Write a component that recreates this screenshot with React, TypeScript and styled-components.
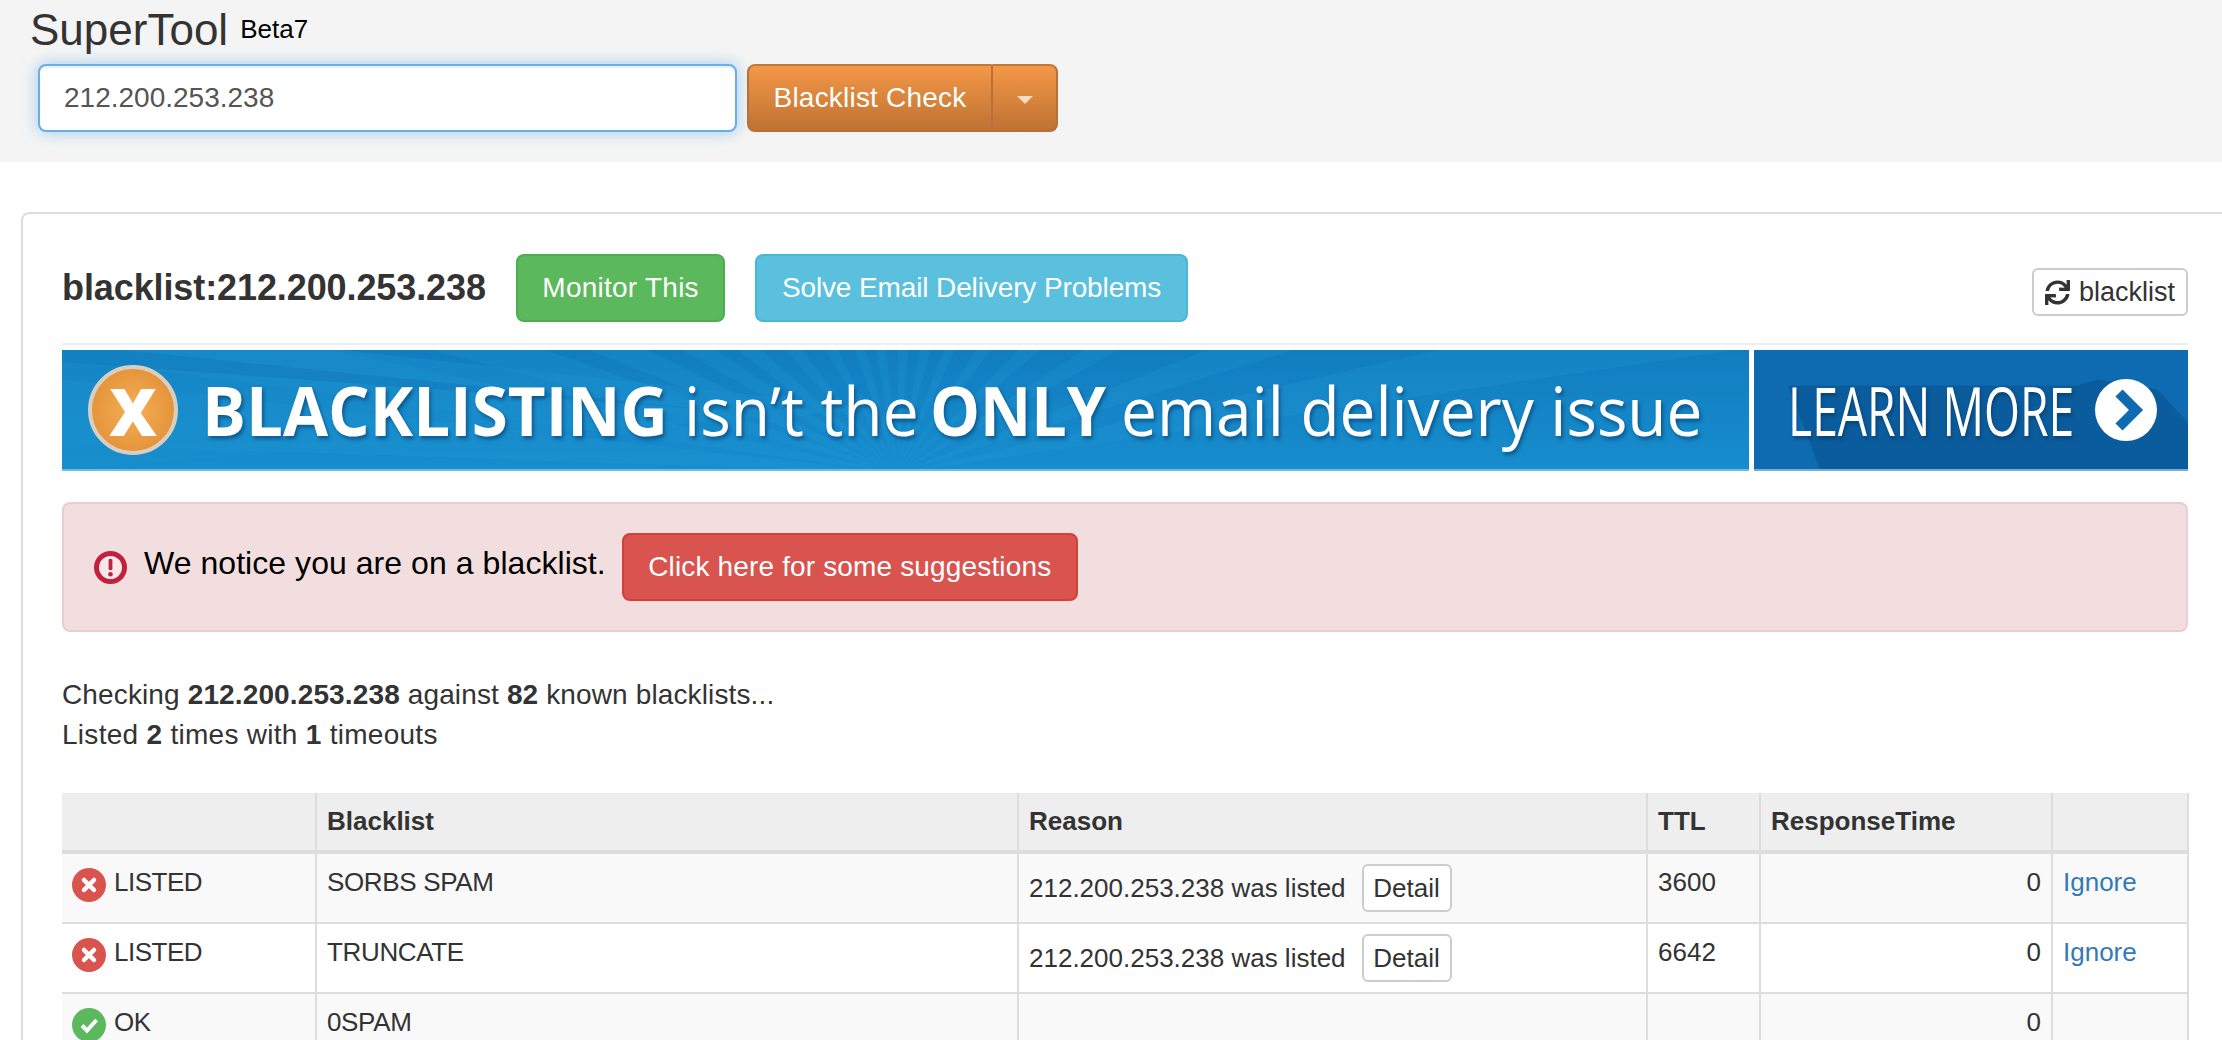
import styled, { createGlobalStyle } from "styled-components";
import { FaSync } from "react-icons/fa";

const GlobalStyle = createGlobalStyle`
  html, body {
    margin: 0;
    padding: 0;
    background: #fff;
    overflow: hidden;
  }
  body {
    width: 2222px;
    height: 1040px;
    font-family: "Liberation Sans", Arial, sans-serif;
    font-size: 28px;
    line-height: 40px;
    color: #333;
  }
  * {
    box-sizing: border-box;
  }
`;

const Page = styled.div`
  width: 2222px;
  height: 1040px;
  overflow: hidden;
`;

const TopBar = styled.header`
  height: 162px;
  background: #f4f4f4;
  padding: 5px 0 0 30px;
`;

const Title = styled.h1`
  margin: 0 0 10px;
  font-size: 44px;
  line-height: 48px;
  font-weight: normal;
  color: #333;
`;

const Version = styled.span`
  margin-left: 12px;
  font-size: 26px;
  color: #000;
  vertical-align: 7px;
`;

const SearchRow = styled.form`
  display: flex;
  gap: 10px;
  margin: 0 0 0 8px;
`;

const SearchInput = styled.input`
  width: 699px;
  height: 68px;
  padding: 0 24px;
  font-family: inherit;
  font-size: 28px;
  color: #555;
  background: #fff;
  border: 2px solid #66afe9;
  border-radius: 8px;
  outline: none;
  box-shadow: inset 0 2px 2px rgba(0, 0, 0, 0.075), 0 0 16px rgba(102, 175, 233, 0.6);
`;

const SplitButton = styled.div`
  display: flex;
  height: 68px;
`;

const OrangeButton = styled.button`
  height: 68px;
  font-family: inherit;
  font-size: 28px;
  color: #fff;
  background: linear-gradient(to bottom, #f39847, #bf7233);
  border: 2px solid #b87038;
  border-top-color: #c27a3c;
`;

const CheckButton = styled(OrangeButton)`
  width: 245px;
  padding: 0;
  letter-spacing: 0.2px;
  border-radius: 8px 0 0 8px;
  border-right-width: 1px;
`;

const CaretButton = styled(OrangeButton)`
  display: flex;
  align-items: center;
  justify-content: center;
  width: 66px;
  padding: 0;
  border-left-width: 1px;
  border-radius: 0 8px 8px 0;
`;

const Caret = styled.span`
  margin-top: 4px;
  border-top: 8px solid #f6dcc2;
  border-left: 8px solid transparent;
  border-right: 8px solid transparent;
`;

const Panel = styled.main`
  width: 2209px;
  margin: 50px 0 0 21px;
  padding: 0 40px 0 39px;
  border: 2px solid #ddd;
  border-radius: 8px 8px 0 0;
`;

const ResultHead = styled.div`
  display: flex;
  align-items: center;
  gap: 30px;
  height: 131px;
  padding: 40px 0 21px;
  border-bottom: 2px solid #eee;
`;

const ResultTitle = styled.h2`
  margin: 0;
  font-size: 36px;
  line-height: 40px;
  font-weight: bold;
  letter-spacing: -0.1px;
  color: #333;
`;

const ActionButton = styled.button<{ $bg: string; $line: string; $track: number }>`
  height: 68px;
  padding: 0 24.5px;
  font-family: inherit;
  font-size: 28px;
  letter-spacing: ${(p) => p.$track}px;
  color: #fff;
  background: ${(p) => p.$bg};
  border: 2px solid ${(p) => p.$line};
  border-radius: 8px;
  white-space: nowrap;
`;

const DefaultButton = styled.button`
  display: inline-flex;
  align-items: center;
  justify-content: center;
  gap: 9px;
  height: 48px;
  font-family: inherit;
  font-size: 26px;
  color: #333;
  background: #fff;
  border: 2px solid #ccc;
  border-radius: 6px;
  padding: 0;
`;

const RefreshButton = styled(DefaultButton)`
  width: 156px;
  margin: 8px 0 0 auto;
  font-size: 27px;
`;

const Banner = styled.div`
  display: flex;
  gap: 5px;
  height: 121px;
  margin-top: 5px;
  color: #fff;
  font-family: "Open Sans", sans-serif;
  font-size: 68px;
  white-space: nowrap;
  text-shadow: 2px 3px 4px rgba(5, 50, 95, 0.55);
`;

const BannerMain = styled.div`
  position: relative;
  display: flex;
  align-items: center;
  width: 1687px;
  padding-left: 26px;
  overflow: hidden;
  background: linear-gradient(to bottom, #117dbf, #178dcd);
  border-bottom: 2px solid #74b9de;
`;

const BannerSide = styled.div`
  position: relative;
  display: flex;
  align-items: center;
  flex: 1;
  padding-left: 34px;
  overflow: hidden;
  background: #0e6bb1;
  border-bottom: 2px solid #74aed3;
`;

const BannerArt = styled.svg`
  position: absolute;
  left: 0;
  top: 0;
  width: 100%;
  height: 100%;
`;

const BannerContent = styled.div`
  position: relative;
  display: flex;
  align-items: center;
`;

const Badge = styled.div`
  display: flex;
  align-items: center;
  justify-content: center;
  width: 90px;
  height: 90px;
  margin-right: 24px;
  font-size: 66px;
  font-weight: 800;
  color: #fff;
  text-shadow: none;
  border: 4px solid #d8cfc0;
  border-radius: 50%;
  background: radial-gradient(circle, #f5ae56 0%, #e8993f 60%, #dc8a2e 100%);
`;

// the banner lettering is narrower than Open Sans, so each run is squeezed to its measured width
const BannerWord = styled.span<{ $width: number; $scale: number; $bold?: boolean; $gap: number }>`
  display: inline-block;
  width: ${(p) => p.$width}px;
  margin-right: ${(p) => p.$gap}px;
  font-weight: ${(p) => (p.$bold ? 700 : 400)};
  transform: scaleX(${(p) => p.$scale});
  transform-origin: left center;
`;

const Notice = styled.div`
  display: flex;
  align-items: center;
  height: 130px;
  margin-top: 31px;
  padding: 0 30px;
  color: #000;
  font-size: 32px;
  background: #f2dede;
  border: 2px solid #ebccd1;
  border-radius: 8px;
`;

const NoticeText = styled.span`
  margin: -8px 16px 0 17px;
  letter-spacing: 0.05px;
`;

const Summary = styled.div`
  margin: 43px 0 38px;
  font-size: 28px;
  line-height: 40px;
  color: #333;
`;

const SummaryLine = styled.div<{ $track: number }>`
  letter-spacing: ${(p) => p.$track}px;
`;

const Table = styled.table`
  width: 2126px;
  table-layout: fixed;
  border-collapse: collapse;
  font-size: 26px;
  line-height: 37px;
  color: #333;
`;

const HeadCell = styled.th<{ $width: number }>`
  width: ${(p) => p.$width}px;
  height: 59px;
  padding: 10px;
  text-align: left;
  font-weight: bold;
  background: #eee;
  border-left: 2px solid #ddd;
  border-right: 2px solid #ddd;
  border-bottom: 4px solid #ddd;

  &:first-child {
    border-left: 0;
  }
`;

const Row = styled.tr<{ $odd: boolean }>`
  background: ${(p) => (p.$odd ? "#f9f9f9" : "#fff")};
`;

const Cell = styled.td<{ $right?: boolean; $caps?: boolean }>`
  height: 70px;
  padding: 10px;
  vertical-align: top;
  text-align: ${(p) => (p.$right ? "right" : "left")};
  letter-spacing: ${(p) => (p.$caps ? "-0.35px" : "0")};
  border: 2px solid #ddd;

  &:first-child {
    border-left: 0;
  }
`;

const StatusCell = styled.div`
  display: flex;
  gap: 8px;
  letter-spacing: -0.5px;
  white-space: nowrap;
`;

const StatusIcon = styled.svg`
  flex: none;
  width: 34px;
  height: 34px;
  margin-top: 4px;
`;

const ReasonRow = styled.div`
  display: flex;
  align-items: center;
  gap: 16px;
  white-space: nowrap;
`;

const DetailButton = styled(DefaultButton)`
  width: 90px;
`;

const IgnoreLink = styled.a`
  color: #337ab7;
  text-decoration: none;
`;

function StatusBadge({ ok }: { ok: boolean }) {
  return (
    <StatusIcon viewBox="0 0 34 34">
      <circle cx="17" cy="17" r="17" fill={ok ? "#5cb85c" : "#d9534f"} />
      {ok ? (
        <path d="M10 17.5l5 5 9.5-10.5" fill="none" stroke="#fff" strokeWidth="4" />
      ) : (
        <path d="M12 12l10 10M22 12l-10 10" fill="none" stroke="#fff" strokeWidth="4.5" strokeLinecap="round" />
      )}
    </StatusIcon>
  );
}

const rays = [-86, -80, -73, -66, -58, -50, -40, -28, -17, -8, 2, 12, 22, 34, 46, 58, 70, 79];

function RayArt() {
  const cx = 836;
  const cy = 125;
  const reach = 1800;
  return (
    <BannerArt viewBox="0 0 1687 121" preserveAspectRatio="none">
      {rays.map((deg, i) => {
        const a = ((deg - 2) * Math.PI) / 180;
        const b = ((deg + 2.5) * Math.PI) / 180;
        const points = [
          `${cx},${cy}`,
          `${cx + Math.sin(a) * reach},${cy - Math.cos(a) * reach}`,
          `${cx + Math.sin(b) * reach},${cy - Math.cos(b) * reach}`,
        ].join(" ");
        return <polygon key={i} points={points} fill="#2aa0dc" opacity="0.2" />;
      })}
      <polygon points="0,0 280,0 820,60 0,121" fill="#1a90cf" opacity="0.45" />
      <polygon points="0,0 60,0 640,60 0,12" fill="#117dbf" opacity="0.7" />
    </BannerArt>
  );
}

function SideArt() {
  return (
    <BannerArt viewBox="0 0 434 121" preserveAspectRatio="none">
      <polygon points="34,36 323,36 344,30 403,40 434,74 434,121 66,121" fill="#0b5c9c" />
    </BannerArt>
  );
}

function AlertIcon() {
  return (
    <svg width="33" height="33" viewBox="0 0 33 33">
      <circle cx="16.5" cy="16.5" r="14" fill="#f7e9ea" stroke="#c2203d" strokeWidth="5" />
      <rect x="14.6" y="8" width="3.8" height="11" rx="1" fill="#c2203d" />
      <circle cx="16.5" cy="23.2" r="2.3" fill="#c2203d" />
    </svg>
  );
}

const rows = [
  { ok: false, status: "LISTED", name: "SORBS SPAM", ttl: "3600" },
  { ok: false, status: "LISTED", name: "TRUNCATE", ttl: "6642" },
  { ok: true, status: "OK", name: "0SPAM", ttl: "" },
];

export default function App() {
  return (
    <Page>
      <GlobalStyle />
      <TopBar>
        <Title>
          SuperTool<Version>Beta7</Version>
        </Title>
        <SearchRow>
          <SearchInput defaultValue="212.200.253.238" />
          <SplitButton>
            <CheckButton type="button">Blacklist Check</CheckButton>
            <CaretButton type="button">
              <Caret />
            </CaretButton>
          </SplitButton>
        </SearchRow>
      </TopBar>
      <Panel>
        <ResultHead>
          <ResultTitle>blacklist:212.200.253.238</ResultTitle>
          <ActionButton $bg="#5cb85c" $line="#4cae4c" $track={0.25}>
            Monitor This
          </ActionButton>
          <ActionButton $bg="#5bc0de" $line="#46b8da" $track={-0.12}>
            Solve Email Delivery Problems
          </ActionButton>
          <RefreshButton>
            <FaSync size={25} />
            blacklist
          </RefreshButton>
        </ResultHead>
        <Banner>
          <BannerMain>
            <RayArt />
            <BannerContent>
              <Badge>X</Badge>
              <BannerWord $bold $width={462} $scale={0.962} $gap={20}>
                BLACKLISTING
              </BannerWord>
              <BannerWord $width={231} $scale={0.943} $gap={15}>
                isn’t the
              </BannerWord>
              <BannerWord $bold $width={173} $scale={0.925} $gap={18}>
                ONLY
              </BannerWord>
              <BannerWord $width={580} $scale={0.94} $gap={0}>
                email delivery issue
              </BannerWord>
            </BannerContent>
          </BannerMain>
          <BannerSide>
            <SideArt />
            <BannerContent>
              <BannerWord $width={289} $scale={0.68} $gap={18}>
                LEARN MORE
              </BannerWord>
              <svg width="62" height="62" viewBox="0 0 62 62">
                <circle cx="31" cy="31" r="31" fill="#fff" />
                <path d="M24 14l17 17-17 17" fill="none" stroke="#0e6bb1" strokeWidth="10" />
              </svg>
            </BannerContent>
          </BannerSide>
        </Banner>
        <Notice>
          <AlertIcon />
          <NoticeText>We notice you are on a blacklist.</NoticeText>
          <ActionButton $bg="#d9534f" $line="#d43f3a" $track={0.15}>
            Click here for some suggestions
          </ActionButton>
        </Notice>
        <Summary>
          <SummaryLine $track={0.13}>
            Checking <b>212.200.253.238</b> against <b>82</b> known blacklists...
          </SummaryLine>
          <SummaryLine $track={0.28}>
            Listed <b>2</b> times with <b>1</b> timeouts
          </SummaryLine>
        </Summary>
        <Table>
          <thead>
            <tr>
              <HeadCell $width={254} />
              <HeadCell $width={702}>Blacklist</HeadCell>
              <HeadCell $width={629}>Reason</HeadCell>
              <HeadCell $width={113}>TTL</HeadCell>
              <HeadCell $width={292}>ResponseTime</HeadCell>
              <HeadCell $width={136} />
            </tr>
          </thead>
          <tbody>
            {rows.map((row, i) => (
              <Row key={row.name} $odd={i % 2 === 0}>
                <Cell>
                  <StatusCell>
                    <StatusBadge ok={row.ok} />
                    {row.status}
                  </StatusCell>
                </Cell>
                <Cell $caps>{row.name}</Cell>
                <Cell>
                  {!row.ok && (
                    <ReasonRow>
                      212.200.253.238 was listed
                      <DetailButton>Detail</DetailButton>
                    </ReasonRow>
                  )}
                </Cell>
                <Cell>{row.ttl}</Cell>
                <Cell $right>0</Cell>
                <Cell>{!row.ok && <IgnoreLink href="#">Ignore</IgnoreLink>}</Cell>
              </Row>
            ))}
          </tbody>
        </Table>
      </Panel>
    </Page>
  );
}
